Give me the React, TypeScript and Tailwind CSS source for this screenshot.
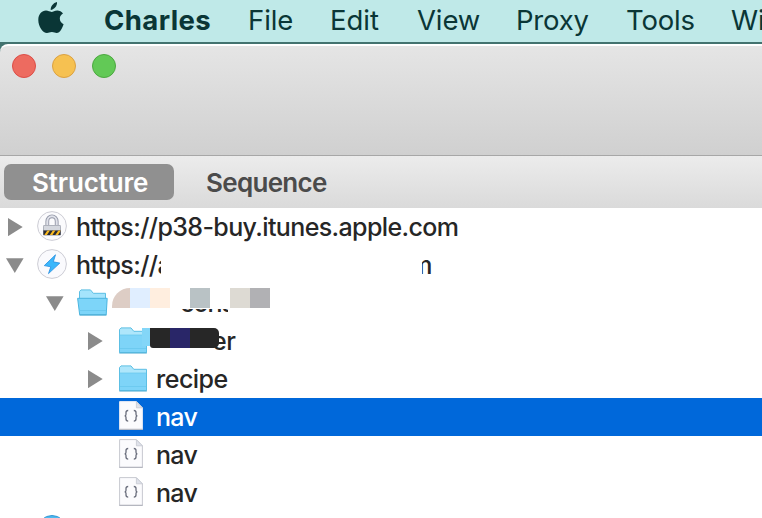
import React from "react";

const menus = [
  { label: "File", cls: "w-[82px] tracking-[-0.1px]" },
  { label: "Edit", cls: "w-[87px] tracking-[0px]" },
  { label: "View", cls: "w-[99px] tracking-[-0.1px]" },
  { label: "Proxy", cls: "w-[110px] tracking-[-0.2px]" },
  { label: "Tools", cls: "w-[105px] tracking-[-0.2px]" },
  { label: "Window", cls: "tracking-[-0.2px]" },
];

function AppleLogo() {
  return (
    <svg className="mt-[2px] ml-[38px] h-[32px] w-[26px] shrink-0" viewBox="0 0 26 32" fill="#0a3636">
      <path d="M12.700 8C12.400 4.400 15.400.9 19 .1c.4 3.900-2.800 7.600-6.300 7.900Z" />
      <path d="M25 11.400c-2 1.200-3.200 2.800-3.200 5.200 0 2.800 1.700 4.700 3.800 5.600-1.100 3.300-3.600 8.800-6.900 8.800-1.700 0-2.600-1-4.800-1-2.300 0-3.200 1-4.900 1C4.900 31 .3 24.600.3 18 .3 12.200 3.900 8.600 8 8.600c2.200 0 3.900 1.300 5.500 1.300s3.100-1.400 5.800-1.400c2.200 0 4.400 1 5.700 2.900Z" />
    </svg>
  );
}

function Arrow({ open = false }: { open?: boolean }) {
  return (
    <svg className="h-[18px] w-[18px] shrink-0" viewBox="0 0 18 18" fill="#8b8b8b">
      {open ? <path d="M0 2.200h17.600L8.800 17Z" /> : <path d="M2 0v18.200L16.700 9.100Z" />}
    </svg>
  );
}

function LockIcon() {
  return (
    <svg className="h-[32px] w-[32px] shrink-0" viewBox="0 0 32 32">
      <defs>
        <clipPath id="lockBand"><path d="M7.500 20.500h17v4.500h-17Z" /></clipPath>
      </defs>
      <circle cx="16" cy="16" r="14.400" fill="#fbfbfd" stroke="#cdcdd5" strokeWidth="1" />
      <path d="M11.300 16v-4.500a4.700 5.200 0 0 1 9.400 0V16" fill="none" stroke="#9498a8" strokeWidth="3.800" />
      <path d="M11.300 16v-4.500a4.700 5.200 0 0 1 9.400 0V16" fill="none" stroke="#e0e2ea" strokeWidth="2" />
      <rect x="7" y="15" width="18" height="10.500" rx="1.500" fill="#888d9b" />
      <rect x="7.500" y="15.500" width="17" height="5" rx="1" fill="#d4d7de" />
      <g clipPath="url(#lockBand)">
        <path d="M7 20h18v5H7Z" fill="#292b34" />
        <path d="M8 25.500l4-6h2.600l-4 6Zm5.500 0 4-6h2.600l-4 6Zm5.500 0 4-6h2.600l-4 6Z" fill="#f9b91e" />
      </g>
    </svg>
  );
}

function BoltIcon() {
  return (
    <svg className="h-[32px] w-[32px] shrink-0" viewBox="0 0 32 32">
      <circle cx="16" cy="16" r="14.400" fill="#fafafd" stroke="#cdcdd5" />
      <path d="M19.500 6.800 8.300 17.600l6.500 1.200-2.300 6.800 11.300-10.500-6.500-1.300Z" fill="#3bb7fb" stroke="#268de0" strokeWidth=".8" />
    </svg>
  );
}

function FolderIcon() {
  return (
    <svg className="h-[28px] w-[29px] shrink-0" viewBox="0 0 29 28">
      <path d="M.5 25.500v-23L2 .9h10l2.800 3.400H27.500v21.200Z" fill="#aee6fb" stroke="#5cbfe4" />
      <path d="M1 8h26v17.400H1Z" fill="#7ed4f8" />
      <path d="M1 8h26M1 21.500h26" stroke="#66c6ed" strokeWidth=".7" />
      <path d="M.3 26h27.500" stroke="#46a8d0" />
    </svg>
  );
}

function OpenFolderIcon() {
  return (
    <svg className="h-[28px] w-[31px] shrink-0" viewBox="0 0 31 28">
      <path d="M2.500 12v-9.500L4 .9h9.500l2.800 3.400h12.200V12Z" fill="#a5e4fc" stroke="#5cbfe4" />
      <path d="M.6 9.300h29.600l-1 16.500H2.700Z" fill="#7dd5f9" stroke="#4bb5df" />
      <path d="M2.400 21.500h27" stroke="#66c6ed" strokeWidth=".7" />
      <path d="M2.500 26h27" stroke="#46a8d0" />
    </svg>
  );
}

function JsonIcon({ plain = false }: { plain?: boolean }) {
  return (
    <svg className="h-[30px] w-[24px] shrink-0" viewBox="0 0 24 30">
      <path d="M.6.6h16.800l6 6.200v21.600H.6Z" fill="#fbfbfd" stroke={plain ? "#e7ebf4" : "#c7c9d0"} />
      <path d="M17.400.8v6h6Z" fill="#dfe2ea" stroke="#c5c8d1" strokeWidth=".8" />
      <path d="M.3 28.300h23.400" stroke="#aeb1ba" />
      <path d="M9.200 9.500c-1.800 0-2.200.6-2.200 2v1.700c0 1.100-.4 1.600-1.400 1.600 1 0 1.400.5 1.400 1.600v1.700c0 1.400.4 2 2.200 2M14.800 9.500c1.800 0 2.200.6 2.200 2v1.700c0 1.100.4 1.600 1.400 1.600-1 0-1.400.5-1.400 1.600v1.700c0 1.400-.4 2-2.200 2" fill="none" stroke="#686c7b" strokeWidth="1.300" />
    </svg>
  );
}

function NavRow({ selected = false }: { selected?: boolean }) {
  return (
    <div className={selected ? "flex h-[38px] items-start bg-[#0068da] pl-[119px] text-white" : "flex h-[38px] items-start pl-[119px]"}>
      <div className="pt-[3px]"><JsonIcon plain={selected} /></div>
      <span className="ml-[13px] tracking-[-0.7px]">nav</span>
    </div>
  );
}

export default function App() {
  return (
    <div className="h-[518px] w-[762px] overflow-hidden bg-white font-['Inter',sans-serif]">
      <header className="flex h-[44px] items-start overflow-hidden border-b-2 border-[#42736f] bg-[#bfe9e8] text-[27.5px] leading-[40px] whitespace-nowrap text-[#0a3636]">
        <AppleLogo />
        <span className="ml-[40px] w-[144px] shrink-0 font-bold tracking-[0.4px]">Charles</span>
        {menus.map((m) => (
          <span key={m.label} className={"shrink-0 " + m.cls}>{m.label}</span>
        ))}
      </header>
      <div className="bg-[#42736f]">
        <div className="flex h-[112px] gap-[16px] rounded-tl-[8px] border-t-2 border-b border-t-white border-b-[#a7a7a7] bg-linear-to-b from-[#e5e5e5] to-[#d0d0d0] pt-[8px] pl-[12px]">
          <i className="h-[24px] w-[24px] rounded-full border border-[#dc4d47] bg-[#ed6b60]" />
          <i className="h-[24px] w-[24px] rounded-full border border-[#dba142] bg-[#f6c151]" />
          <i className="h-[24px] w-[24px] rounded-full border border-[#4ca840] bg-[#62c956]" />
        </div>
      </div>
      <div className="flex h-[52px] bg-linear-to-b from-[#ececec] to-[#dadada] pt-[8px] pl-[4px] text-[26px] leading-[37px] font-semibold">
        <div className="h-[36px] w-[170px] rounded-[7px] bg-[#909090] pl-[28px] tracking-[-0.15px] text-white">Structure</div>
        <div className="pl-[32px] tracking-[-0.7px] text-[#4b4b4b]">Sequence</div>
      </div>
      <main className="text-[25px] leading-[38px] font-[450] tracking-[-0.5px] whitespace-nowrap text-[#262626]">
        <div className="flex h-[38px] items-center pl-[6px]">
          <Arrow />
          <div className="ml-[12px] h-[34px]"><LockIcon /></div>
          <span className="ml-[8px] tracking-[-0.62px]">https://p38-buy.itunes.apple.com</span>
        </div>
        <div className="flex h-[38px] items-center pl-[6px]">
          <Arrow open />
          <div className="ml-[12px] h-[34px]"><BoltIcon /></div>
          <span className="ml-[8px] w-[85px] overflow-hidden tracking-[-0.62px]">https://a</span>
          <span className="ml-[261px] flex w-[10px] justify-end overflow-hidden">m</span>
        </div>
        <div className="relative flex h-[38px] items-start pl-[46px]">
          <div className="pt-[10px]"><Arrow open /></div>
          <div className="ml-[13px] pt-[5px]"><OpenFolderIcon /></div>
          <div className="absolute top-0 left-[180px] h-[28px] w-[48px] overflow-hidden tracking-[-1px]">cons</div>
          <div className="absolute top-[4px] left-[180px] h-[21px] w-[50px] bg-white" />
          <div className="absolute top-[4px] left-[112px] flex h-[20px]">
            <i className="w-[18px] rounded-tl-[18px] bg-[#ddcdc5]" />
            <i className="w-[20px] bg-[#e0eeff]" />
            <i className="w-[20px] bg-[#ffeedf]" />
            <i className="ml-[20px] w-[20px] bg-[#b9c2c5]" />
            <i className="ml-[20px] w-[20px] bg-[#dddad3]" />
            <i className="w-[20px] bg-[#b1b1b4]" />
          </div>
        </div>
        <div className="relative flex h-[38px] items-start pl-[86px]">
          <div className="pt-[10px]"><Arrow /></div>
          <div className="ml-[15px] pt-[5px]"><FolderIcon /></div>
          <span className="ml-[64px]">er</span>
          <div className="absolute top-[6px] left-[142px] flex h-[20px]">
            <i className="h-[18px] w-[8px] bg-[#83d6f8]" />
            <i className="w-[20px] rounded-bl-[3px] bg-[#272727]" />
            <i className="w-[20px] bg-[#292668]" />
            <i className="w-[29px] rounded-r-[5px] bg-[#272727]" />
          </div>
        </div>
        <div className="flex h-[38px] items-start pl-[86px]">
          <div className="pt-[10px]"><Arrow /></div>
          <div className="ml-[15px] pt-[5px]"><FolderIcon /></div>
          <span className="ml-[8px]">recipe</span>
        </div>
        <NavRow selected />
        <NavRow />
        <NavRow />
        <div className="h-[6px] overflow-hidden pt-[3px] pl-[37px]">
          <svg className="h-[30px] w-[30px]" viewBox="0 0 30 30"><circle cx="15" cy="15" r="14.500" fill="#4cb9ef" stroke="#3597d3" /></svg>
        </div>
      </main>
    </div>
  );
}
